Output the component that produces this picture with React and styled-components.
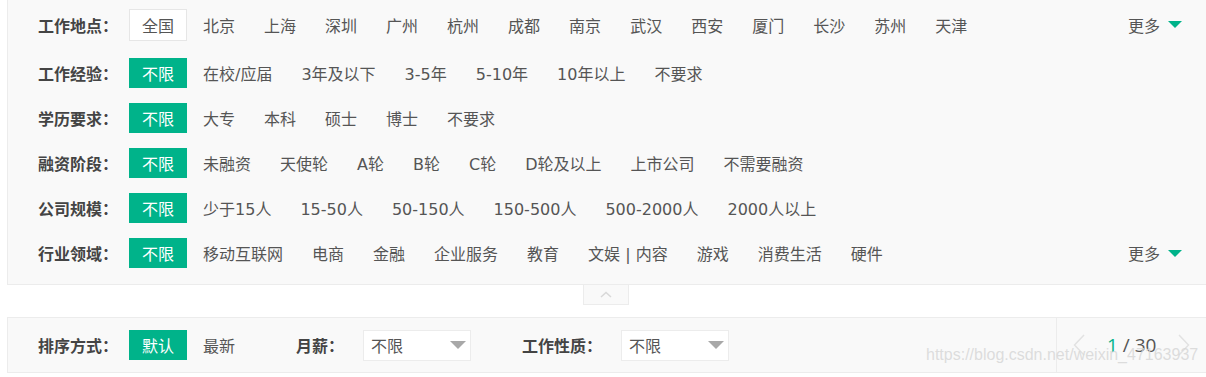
import React from "react";
import styled, { createGlobalStyle } from "styled-components";

const GREEN = "#00b38a";
const FONT = `"DejaVu Sans", "Noto Sans CJK SC", sans-serif`;

const filters = [
  {
    label: "工作地点",
    first: true,
    outlined: true,
    options: ["全国", "北京", "上海", "深圳", "广州", "杭州", "成都", "南京", "武汉", "西安", "厦门", "长沙", "苏州", "天津"],
    more: true,
  },
  {
    label: "工作经验",
    options: ["不限", "在校/应届", "3年及以下", "3-5年", "5-10年", "10年以上", "不要求"],
  },
  {
    label: "学历要求",
    options: ["不限", "大专", "本科", "硕士", "博士", "不要求"],
  },
  {
    label: "融资阶段",
    options: ["不限", "未融资", "天使轮", "A轮", "B轮", "C轮", "D轮及以上", "上市公司", "不需要融资"],
  },
  {
    label: "公司规模",
    options: ["不限", "少于15人", "15-50人", "50-150人", "150-500人", "500-2000人", "2000人以上"],
  },
  {
    label: "行业领域",
    options: ["不限", "移动互联网", "电商", "金融", "企业服务", "教育", "文娱 | 内容", "游戏", "消费生活", "硬件"],
    more: true,
  },
];

const App = () => {
  return (
    <>
      <GlobalStyle />
      <Page>
        <FilterPanel>
          {filters.map((f) => (
            <Row key={f.label} first={f.first}>
              <Label>{f.label}：</Label>
              <Options>
                {f.options.map((o, i) => (
                  <Option key={o} active={i === 0 && !f.outlined} outlined={i === 0 && f.outlined}>
                    {o}
                  </Option>
                ))}
              </Options>
              {f.more && (
                <More>
                  更多
                  <Caret />
                </More>
              )}
            </Row>
          ))}
        </FilterPanel>
        <FoldTab>
          <svg width="12" height="7" viewBox="0 0 12 7">
            <path d="M1 6 L6 1.5 L11 6" fill="none" stroke="#d8d8d8" strokeWidth="1.5" />
          </svg>
        </FoldTab>
        <SortBar>
          <SortLeft>
            <Label>排序方式：</Label>
            <Option active>默认</Option>
            <Option>最新</Option>
            <SelectLabel gap={45}>月薪：</SelectLabel>
            <Select>
              不限
              <GreyCaret />
            </Select>
            <SelectLabel gap={51}>工作性质：</SelectLabel>
            <Select>
              不限
              <GreyCaret />
            </Select>
          </SortLeft>
          <Pager>
            <Arrow>
              <svg width="12" height="22" viewBox="0 0 12 22">
                <path d="M11 1 L1.5 11 L11 21" fill="none" stroke="#e2e2e2" strokeWidth="1.5" />
              </svg>
            </Arrow>
            <PageText>
              <Current>1</Current> / 30
            </PageText>
            <Arrow>
              <svg width="12" height="22" viewBox="0 0 12 22">
                <path d="M1 1 L10.5 11 L1 21" fill="none" stroke="#e2e2e2" strokeWidth="1.5" />
              </svg>
            </Arrow>
          </Pager>
          <Watermark>https://blog.csdn.net/weixin_47163937</Watermark>
        </SortBar>
      </Page>
    </>
  );
};

export default App;

const GlobalStyle = createGlobalStyle`
  body {
    margin: 0;
    overflow: hidden;
    background: #fff;
    font-family: ${FONT};
  }
`;

const Page = styled.div`
  width: 1200px;
  padding-left: 7px;
  display: flex;
  flex-direction: column;
`;

const FilterPanel = styled.div`
  background: #f9f9f9;
  border: 1px solid #ececec;
  border-top: none;
  padding: 8px 0 16px 30px;
  box-sizing: border-box;
`;

const Row = styled.div`
  display: flex;
  align-items: center;
  height: ${(p) => (p.first ? "33px" : "30px")};
  margin-bottom: ${(p) => (p.first ? "17px" : "15px")};
  &:last-child {
    margin-bottom: 0;
  }
`;

const Label = styled.span`
  width: 91px;
  flex-shrink: 0;
  font-family: "Noto Sans CJK SC", sans-serif;
  font-size: 16px;
  font-weight: bold;
  color: #444;
  white-space: nowrap;
`;

const Options = styled.div`
  display: flex;
  align-items: center;
  flex: 1;
`;

const Option = styled.span`
  display: inline-flex;
  align-items: center;
  height: ${(p) => (p.outlined ? "32px" : "30px")};
  padding: 0 12px;
  margin-right: 3px;
  border: 1px solid ${(p) => (p.outlined ? "#e6e6e6" : "transparent")};
  background: ${(p) => (p.active ? GREEN : p.outlined ? "#fff" : "transparent")};
  color: ${(p) => (p.active ? "#fff" : "#555")};
  font-size: 16px;
  white-space: nowrap;
  box-sizing: border-box;
`;

const More = styled.span`
  display: inline-flex;
  align-items: center;
  gap: 8px;
  margin-right: 24px;
  font-size: 16px;
  color: #555;
`;

const Caret = styled.i`
  width: 0;
  height: 0;
  border-left: 7px solid transparent;
  border-right: 7px solid transparent;
  border-top: 7px solid ${GREEN};
`;

const FoldTab = styled.div`
  align-self: flex-start;
  margin-left: 576px;
  width: 46px;
  height: 20px;
  background: #f9f9f9;
  border: 1px solid #ececec;
  border-top: none;
  box-sizing: border-box;
  display: flex;
  align-items: center;
  justify-content: center;
`;

const SortBar = styled.div`
  position: relative;
  margin-top: 12px;
  height: 56px;
  background: #f9f9f9;
  border: 1px solid #ececec;
  border-right: none;
  box-sizing: border-box;
  display: flex;
  align-items: center;
  padding-left: 30px;
`;

const SortLeft = styled.div`
  display: flex;
  align-items: center;
  flex: 1;
`;

const SelectLabel = styled(Label)`
  width: auto;
  margin-left: ${(p) => p.gap}px;
  margin-right: 19px;
`;

const Select = styled.div`
  width: 108px;
  height: 31px;
  box-sizing: border-box;
  background: #fff;
  border: 1px solid #ececec;
  display: flex;
  align-items: center;
  justify-content: space-between;
  padding: 0 4px 0 7px;
  font-size: 16px;
  color: #555;
`;

const GreyCaret = styled.i`
  width: 0;
  height: 0;
  border-left: 8px solid transparent;
  border-right: 8px solid transparent;
  border-top: 8px solid #a8a8a8;
`;

const Pager = styled.div`
  width: 152px;
  height: 100%;
  border-left: 1px solid #ececec;
  display: flex;
  align-items: center;
  gap: 22px;
  padding-left: 16px;
  box-sizing: border-box;
  margin-right: -1px;
`;

const Arrow = styled.span`
  display: flex;
  align-items: center;
`;

const PageText = styled.span`
  font-family: "Open Sans", "Noto Sans", sans-serif;
  font-size: 19px;
  color: #555;
`;

const Current = styled.span`
  color: ${GREEN};
`;

const Watermark = styled.span`
  position: absolute;
  left: 918px;
  top: 28px;
  font-family: "Liberation Sans", Arial, sans-serif;
  font-size: 16px;
  color: rgba(215, 215, 215, 0.85);
  pointer-events: none;
  white-space: nowrap;
`;
